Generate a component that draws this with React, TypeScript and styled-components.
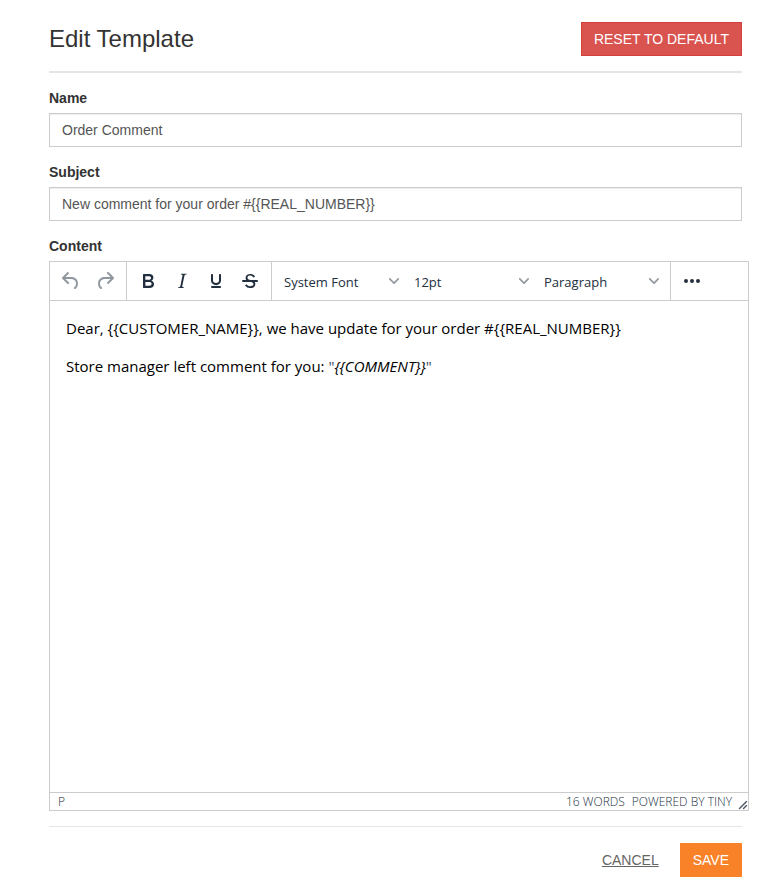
import React from "react";
import styled, { createGlobalStyle, css } from "styled-components";

const GlobalStyle = createGlobalStyle`
  *, *::before, *::after { box-sizing: border-box; }
  body {
    margin: 0;
    background: #fff;
    color: #333;
    font: 14px/20px "Liberation Sans", Arial, sans-serif;
  }
`;

const uiFont = `"Open Sans", "Noto Sans", sans-serif`;

const Page = styled.main`
  padding: 22px 35px 16px 49px;
`;

const Header = styled.header`
  display: flex;
  align-items: center;
  justify-content: space-between;
  padding-bottom: 15px;
  margin-bottom: 15px;
  border-bottom: 2px solid #e5e5e5;
`;

const Title = styled.h1`
  margin: 0;
  font-size: 24px;
  line-height: 34px;
  font-weight: 400;
`;

const Button = styled.button<{ $tone: "danger" | "primary" }>`
  height: 34px;
  padding: 0 12px;
  border: 1px solid ${(p) => (p.$tone === "danger" ? "#d43f3a" : "#f98228")};
  background: ${(p) => (p.$tone === "danger" ? "#d9534f" : "#f98228")};
  color: #fff;
  font: inherit;
  text-transform: uppercase;
  cursor: pointer;
`;

const Field = styled.div`
  display: flex;
  flex-direction: column;
  gap: 5px;
  margin-bottom: 15px;
`;

const labelStyle = css`
  font-weight: 700;
  line-height: 20px;
`;

const Label = styled.label`
  ${labelStyle}
`;

const GroupLabel = styled.div`
  ${labelStyle}
`;

const TextInput = styled.input`
  width: 100%;
  height: 34px;
  padding: 6px 12px;
  border: 1px solid #ccc;
  border-radius: 0;
  box-shadow: inset 0 1px 1px rgba(0, 0, 0, 0.075);
  color: #555;
  font: inherit;
`;

const Editor = styled.div`
  display: flex;
  flex-direction: column;
  margin-right: -7px;
  border: 1px solid #ccc;
  font-family: ${uiFont};
`;

const Toolbar = styled.div`
  display: flex;
  height: 39px;
  border-bottom: 1px solid #ccc;
`;

const ToolGroup = styled.div`
  display: flex;
  padding: 0 4px;

  & + & {
    border-left: 1px solid #ccc;
  }
`;

const ToolButton = styled.button`
  display: flex;
  align-items: center;
  justify-content: center;
  width: 34px;
  height: 38px;
  padding: 0;
  border: 0;
  background: none;
  color: #222f3e;

  &:disabled {
    color: rgba(34, 47, 62, 0.5);
  }
`;

const Icon = styled.svg`
  display: block;
  fill: currentColor;
`;

const SelectBox = styled.div`
  display: grid;
  align-items: center;
  width: 130px;
  color: #222f3e;

  & > * {
    grid-area: 1 / 1;
  }

  & > svg {
    justify-self: end;
    margin-right: 7px;
    opacity: 0.5;
    pointer-events: none;
  }
`;

const Select = styled.select`
  appearance: none;
  width: 100%;
  height: 38px;
  padding: 2px 24px 0 8px;
  border: 0;
  background: none;
  color: inherit;
  font: 13px/20px ${uiFont};
`;

const Content = styled.div`
  min-height: 491px;
  padding: 16px;
  color: #000;
  font-size: 15px;
  line-height: 22px;
  outline: none;

  p {
    margin: 0 0 16px;
  }
`;

const Quote = styled.span`
  color: #34495e;
`;

const StatusBar = styled.div`
  display: flex;
  align-items: center;
  height: 18px;
  padding-left: 8px;
  border-top: 1px solid #ccc;
  color: #222f3e;
  font-size: 12px;
  font-weight: 300;
  line-height: 17px;
  text-transform: uppercase;
`;

const StatusPath = styled.span`
  flex: 1;
`;

const StatusLink = styled.a`
  margin: 0 6px 0 7px;
  color: inherit;
  text-decoration: none;
`;

const ResizeHandle = styled.span`
  align-self: flex-end;
  opacity: 0.8;
`;

const Footer = styled.footer`
  display: flex;
  align-items: center;
  justify-content: flex-end;
  gap: 21px;
  margin-top: 15px;
  padding-top: 16px;
  border-top: 1px solid #e5e5e5;
`;

const CancelLink = styled.a`
  color: #666;
  text-decoration: underline;
  text-transform: uppercase;
`;

const icons = {
  undo: "M6.4 8H12c3.7 0 6.2 2 6.8 5.1.6 2.7-.4 5.6-2.3 6.8a1 1 0 01-1-1.8c1.1-.6 1.8-2.7 1.4-4.6-.5-2.1-2.1-3.5-4.9-3.5H6.4l3.3 3.3a1 1 0 11-1.4 1.4l-5-5a1 1 0 010-1.4l5-5a1 1 0 011.4 1.4L6.4 8z",
  redo: "M17.6 10H12c-2.8 0-4.4 1.4-4.9 3.5-.4 2 .3 4 1.4 4.6a1 1 0 11-1 1.8c-2-1.2-2.9-4.1-2.3-6.8.6-3 3-5.1 6.8-5.1h5.6l-3.3-3.3a1 1 0 111.4-1.4l5 5a1 1 0 010 1.4l-5 5a1 1 0 01-1.4-1.4l3.3-3.3z",
  bold: "M7.8 19c-.3 0-.5 0-.6-.2l-.2-.5V5.7c0-.2 0-.4.2-.5l.6-.2h5c1.5 0 2.7.3 3.5 1 .7.6 1.1 1.4 1.1 2.5a3 3 0 01-.6 1.9c-.4.6-1 1-1.6 1.2.4.1.9.3 1.3.6s.8.7 1 1.2c.4.4.5 1 .5 1.6 0 1.3-.4 2.3-1.3 3-.8.7-2.1 1-3.8 1H7.8zm5-8.3c.6 0 1.2-.1 1.6-.5.4-.3.6-.7.6-1.3 0-1.1-.8-1.7-2.3-1.7H9.3v3.5h3.4zm.5 6c.7 0 1.3-.1 1.7-.4.4-.4.6-.9.6-1.5s-.2-1-.7-1.4c-.4-.3-1-.4-2-.4H9.4v3.8h4z",
  italic:
    "M16.7 4.7l-.1.9h-.3c-.6 0-1 0-1.4.3-.3.3-.4.6-.5 1.1l-2.1 9.8v.6c0 .5.4.8 1.4.8h.2l-.2.8H8l.2-.8h.2c1.1 0 1.8-.5 2-1.5l2-9.8.1-.5c0-.6-.4-.8-1.4-.8h-.3l.2-.9h5.8z",
  underline:
    "M16 5c.6 0 1 .4 1 1v5.5a4 4 0 01-.4 1.8l-1 1.4a5.3 5.3 0 01-5.5 1 5 5 0 01-1.6-1c-.5-.4-.8-.9-1.1-1.4a4 4 0 01-.4-1.8V6c0-.6.4-1 1-1s1 .4 1 1v5.5c0 .3 0 .6.2 1l.6.7a3.3 3.3 0 002.2.8 3.4 3.4 0 002.2-.8c.3-.2.4-.5.6-.8l.2-.9V6c0-.6.4-1 1-1zM8 17h8c.6 0 1 .4 1 1s-.4 1-1 1H8a1 1 0 010-2z",
  strike:
    "M15.6 8.5c-.5-.7-1-1.1-1.3-1.3-.6-.4-1.3-.6-2-.6-2.7 0-2.8 1.7-2.8 2.1 0 1.6 1.8 2 3.2 2.3 4.4.9 4.6 2.8 4.6 3.9 0 1.4-.7 4.1-5 4.1A6.2 6.2 0 017 16.4l1.5-1.1c.4.6 1.6 2 3.7 2 1.6 0 2.5-.4 3-1.2.4-.8.3-2-.8-2.6-.7-.4-1.6-.7-2.9-1-1-.2-3.9-.8-3.9-3.6C7.6 6 10.3 5 12.4 5c2.9 0 4.2 1.6 4.7 2.4l-1.5 1.1zM5 11h14a1 1 0 010 2H5a1 1 0 010-2z",
  more: "M6 10a2 2 0 100 4 2 2 0 000-4zm12 0a2 2 0 100 4 2 2 0 000-4zm-6 0a2 2 0 100 4 2 2 0 000-4z",
  chevron:
    "M8.7 2.2c.3-.3.8-.3 1 0 .4.4.4.9 0 1.2L5.7 7.8c-.3.3-.9.3-1.2 0L.2 3.4a.8.8 0 010-1.2c.3-.3.8-.3 1.1 0L5 6l3.7-3.8z",
  resize:
    "M8.1 1.1A.5.5 0 119 2l-7 7A.5.5 0 111 8l7-7zM8.1 5.1A.5.5 0 119 6l-3 3A.5.5 0 115 8l3-3z",
};

type IconName = keyof typeof icons;

function Glyph({ name, size = 24 }: { name: IconName; size?: number }) {
  return (
    <Icon width={size} height={size} viewBox={`0 0 ${size} ${size}`} aria-hidden="true">
      <path d={icons[name]} />
    </Icon>
  );
}

function Tool({ name, label, disabled }: { name: IconName; label: string; disabled?: boolean }) {
  return (
    <ToolButton type="button" aria-label={label} disabled={disabled}>
      <Glyph name={name} />
    </ToolButton>
  );
}

function ToolSelect({ label, options }: { label: string; options: string[] }) {
  return (
    <SelectBox>
      <Select aria-label={label} defaultValue={options[0]}>
        {options.map((o) => (
          <option key={o}>{o}</option>
        ))}
      </Select>
      <Glyph name="chevron" size={10} />
    </SelectBox>
  );
}

export default function App() {
  return (
    <>
      <GlobalStyle />
      <Page>
        <Header>
          <Title>Edit Template</Title>
          <Button type="button" $tone="danger">
            Reset to default
          </Button>
        </Header>

        <Field>
          <Label htmlFor="name">Name</Label>
          <TextInput id="name" type="text" defaultValue="Order Comment" />
        </Field>
        <Field>
          <Label htmlFor="subject">Subject</Label>
          <TextInput
            id="subject"
            type="text"
            defaultValue="New comment for your order #{{REAL_NUMBER}}"
          />
        </Field>
        <Field>
          <GroupLabel id="content-label">Content</GroupLabel>
          <Editor>
            <Toolbar role="toolbar" aria-label="Formatting">
              <ToolGroup>
                <Tool name="undo" label="Undo" disabled />
                <Tool name="redo" label="Redo" disabled />
              </ToolGroup>
              <ToolGroup>
                <Tool name="bold" label="Bold" />
                <Tool name="italic" label="Italic" />
                <Tool name="underline" label="Underline" />
                <Tool name="strike" label="Strikethrough" />
              </ToolGroup>
              <ToolGroup>
                <ToolSelect label="Font" options={["System Font"]} />
                <ToolSelect label="Font size" options={["12pt"]} />
                <ToolSelect label="Block format" options={["Paragraph"]} />
              </ToolGroup>
              <ToolGroup>
                <Tool name="more" label="More" />
              </ToolGroup>
            </Toolbar>
            <Content
              role="textbox"
              aria-multiline="true"
              aria-labelledby="content-label"
              contentEditable
              suppressContentEditableWarning
              spellCheck={false}
            >
              <p>
                {"Dear, {{CUSTOMER_NAME}}, we have update for your order #{{REAL_NUMBER}}"}
              </p>
              <p>
                Store manager left comment for you: <Quote>"</Quote>
                <em>{"{{COMMENT}}"}</em>
                <Quote>"</Quote>
              </p>
            </Content>
            <StatusBar>
              <StatusPath>p</StatusPath>
              <span>16 words</span>
              <StatusLink href="#tiny">Powered by Tiny</StatusLink>
              <ResizeHandle>
                <Glyph name="resize" size={10} />
              </ResizeHandle>
            </StatusBar>
          </Editor>
        </Field>

        <Footer>
          <CancelLink href="#cancel">Cancel</CancelLink>
          <Button type="submit" $tone="primary">
            Save
          </Button>
        </Footer>
      </Page>
    </>
  );
}
